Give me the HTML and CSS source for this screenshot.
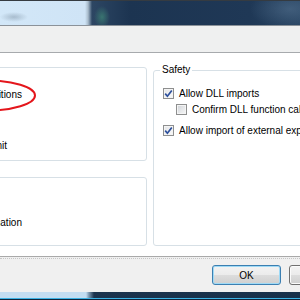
FILE: index.html
```html
<!DOCTYPE html>
<html>
<head>
<meta charset="utf-8">
<link rel="stylesheet" href="styles.css">
</head>
<body>
<div class="win">
  <div class="titlebar"></div>
  <div class="toparea"></div>
  <div class="content">
    <div class="leftcol">
      <div class="panel p1">
        <div class="item i1"><span>Show all definitions</span></div>
        <div class="item i2"><span>Time limit</span></div>
      </div>
      <div class="panel p2">
        <div class="item i3"><span>Enable animation</span></div>
      </div>
    </div>
    <fieldset class="safety">
      <legend>Safety</legend>
      <label class="row r1"><span class="cb checked"><svg viewBox="0 0 11 11" width="11" height="11"><path d="M2.2 5.6 L4.4 8.2 L8.8 2.4" fill="none" stroke="#2c4f9c" stroke-width="1.7"/></svg></span>Allow DLL imports</label>
      <label class="row r2"><span class="cb"></span>Confirm DLL function calls</label>
      <label class="row r3"><span class="cb checked"><svg viewBox="0 0 11 11" width="11" height="11"><path d="M2.2 5.6 L4.4 8.2 L8.8 2.4" fill="none" stroke="#2c4f9c" stroke-width="1.7"/></svg></span>Allow import of external expressions</label>
    </fieldset>
  </div>
  <div class="footer">
    <div class="dots">
      <button class="btn default">OK</button>
      <button class="btn">Cancel</button>
    </div>
  </div>
  <div class="bottombar"></div>
  <svg class="mark" width="300" height="300" viewBox="0 0 300 300"><ellipse cx="-15" cy="95.5" rx="50" ry="15.2" fill="none" stroke="#e4161c" stroke-width="2"/></svg>
</div>
</body>
</html>
```
FILE: styles.css
```css
body {
  margin: 0;
  width: 300px;
  height: 300px;
  overflow: hidden;
  font-family: "Liberation Sans", Arial, sans-serif;
  font-size: 10px;
  color: #000;
}
.win {
  position: relative;
  width: 300px;
  height: 300px;
  overflow: hidden;
}
.titlebar {
  height: 24px;
  border-top: 1px solid #353b41;
  border-bottom: 1px solid #8b9299;
  background:
    radial-gradient(ellipse 8px 11px at 102px 16px, rgba(60,125,115,0.85), rgba(60,125,115,0)),
    radial-gradient(ellipse 14px 5px at 14px 16px, rgba(150,170,188,0.7), rgba(150,170,188,0)),
    radial-gradient(ellipse 40px 20px at 290px 8px, rgba(90,120,150,0.5), rgba(90,120,150,0)),
    linear-gradient(to right, #d2e7f8 0, #cfe4f6 85px, #a9bccc 88px, #2d4663 92px, #1c3451 130px, #1f3856 250px, #284462 300px);
}
.toparea {
  height: 26px;
  background: #eff0f0;
  border-bottom: 1px solid #a7aaad;
}
.content {
  height: 203px;
  background: #fff;
  display: flex;
  gap: 6px;
  align-items: flex-start;
}
.leftcol {
  flex: none;
  width: 147px;
  padding-top: 14px;
  display: flex;
  flex-direction: column;
  gap: 16px;
}
.panel {
  margin-left: -10px;
  width: 157px;
  box-sizing: border-box;
  border: 1px solid #d7e0e6;
  border-radius: 3px;
}
.p1 { height: 94px; }
.p2 { height: 69px; }
.item {
  display: flex;
  justify-content: flex-end;
  white-space: nowrap;
  line-height: 12px;
}
.i1 { width: 31px; margin-top: 21px; }
.i2 { width: 16px; margin-top: 39px; }
.i3 { width: 31px; margin-top: 39px; }
.safety {
  flex: none;
  width: 170px;
  height: 182px;
  box-sizing: border-box;
  margin: 11px 0 0 0;
  padding: 12px 0 0 9px;
  border: 1px solid #d7e0e6;
  border-radius: 3px;
  min-width: 0;
}
.safety legend {
  margin-left: -3px;
  padding: 0 2px;
  line-height: 12px;
}
.row {
  display: flex;
  align-items: center;
  gap: 5px;
  height: 11px;
  line-height: 11px;
  white-space: nowrap;
}
.r2 { margin-top: 5px; margin-left: 13px; }
.r3 { margin-top: 10px; }
.cb {
  flex: none;
  width: 11px;
  height: 11px;
  box-sizing: border-box;
  border: 1px solid #8e8f8f;
  background: linear-gradient(135deg, #cdd1d6 0%, #e4e6e8 50%, #f7f7f7 100%);
  box-shadow: inset 0 0 0 1px #f4f4f4;
  position: relative;
}
.cb.checked {
  background: linear-gradient(135deg, #e2e4e7 0%, #f2f2f2 60%, #fafafa 100%);
}
.cb svg {
  position: absolute;
  left: -1px;
  top: -1px;
}
.footer {
  height: 36px;
  box-sizing: border-box;
  border-top: 1px solid #a9a9a9;
  padding-top: 1px;
  background: #f0f0f0;
}
.dots {
  border-top: 1px dotted #c6c6c6;
  display: flex;
  gap: 8px;
  padding: 6px 0 0 212px;
}
.btn {
  flex: none;
  width: 69px;
  height: 20px;
  box-sizing: border-box;
  padding: 0;
  border: 1px solid #707070;
  border-radius: 3px;
  background: linear-gradient(#f3f3f3 0, #ebebeb 50%, #dddddd 50%, #cfcfcf 100%);
  box-shadow: inset 0 0 0 1px #fbfbfb;
  font-family: "Liberation Sans", Arial, sans-serif;
  font-size: 10px;
  color: #000;
}
.btn.default {
  border-color: #3c7fb1;
  box-shadow: inset 0 0 0 1px #9fdaf6;
}
.bottombar {
  height: 8px;
  background:
    linear-gradient(to bottom, rgba(0,0,0,0) 6px, #3bb2e4 6px, #3bb2e4 7px, #10243a 7px),
    linear-gradient(to right, #c3ddf1 0, #c3ddf1 86px, #7a96ae 89px, #1b334d 94px, #17304a 300px);
}
.mark {
  position: absolute;
  left: 0;
  top: 0;
  pointer-events: none;
}
```
